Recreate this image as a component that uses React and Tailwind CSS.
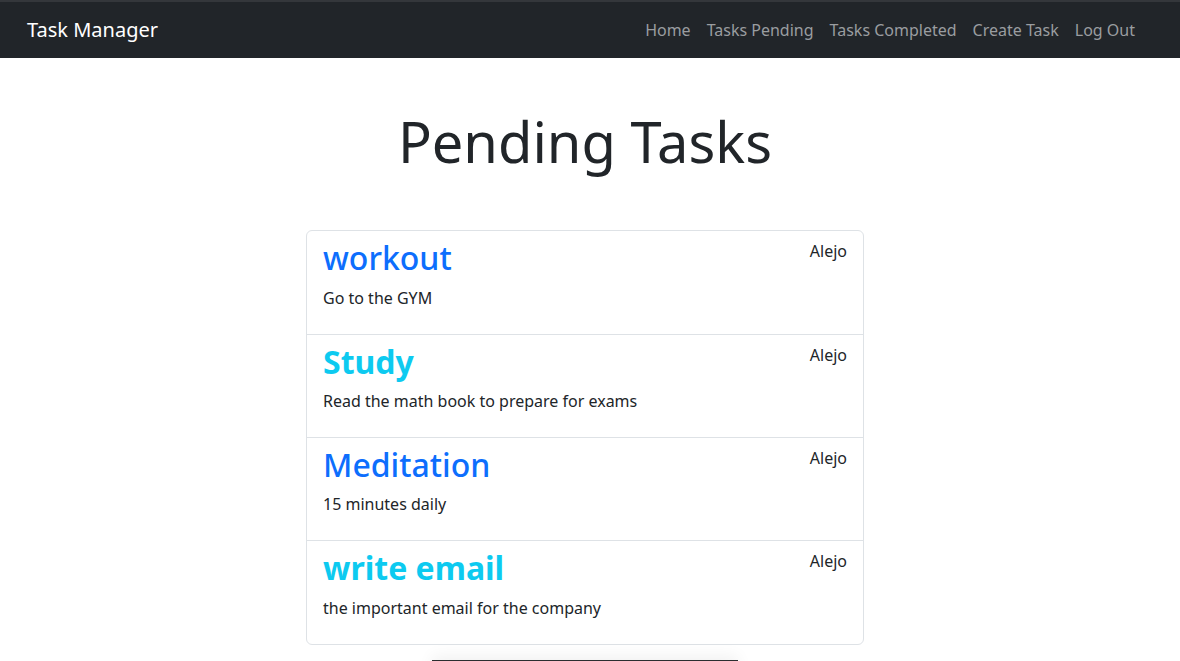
import React from "react";

const tasks = [
  { title: "workout", desc: "Go to the GYM", cls: "text-[#0d6efd] font-medium" },
  { title: "Study", desc: "Read the math book to prepare for exams", cls: "text-[#0dcaf0] font-bold" },
  { title: "Meditation", desc: "15 minutes daily", cls: "text-[#0d6efd] font-medium" },
  { title: "write email", desc: "the important email for the company", cls: "text-[#0dcaf0] font-bold" },
];

export default function App() {
  return (
    <div className="min-h-[661px] bg-white text-[#212529] font-['Noto_Sans',sans-serif]">
      <nav className="h-[58px] bg-[#212529] border-t-2 border-[#34373b] flex items-center pl-[27px] pr-[37px]">
        <span className="text-[20px] leading-[30px] text-white">Task Manager</span>
        <ul className="ml-auto flex items-center">
          {["Home", "Tasks Pending", "Tasks Completed", "Create Task", "Log Out"].map((l) => (
            <li key={l} className="px-[8px] text-[16px] leading-[24px] text-[#9a9da0]">
              {l}
            </li>
          ))}
        </ul>
      </nav>
      <main className="w-[1170px] flex flex-col items-center">
        <h1 className="mt-[50px] text-[56px] leading-[1.2] font-normal">Pending Tasks</h1>
        <ul className="mt-[55px] w-[558px] border border-[#dee2e6] rounded-[6px]">
          {tasks.map((t, i) => (
            <li
              key={t.title}
              className={`px-[16px] pt-[8px] pb-[8px] ${i > 0 ? "border-t border-[#dee2e6]" : ""}`}
            >
              <div className="flex justify-between items-start">
                <h2 className={`text-[32px] leading-[1.2] mb-[8px] ${t.cls}`}>{t.title}</h2>
                <small className="text-[16px] leading-[24px]">Alejo</small>
              </div>
              <p className="text-[16px] leading-[24px] mb-[16px]">{t.desc}</p>
            </li>
          ))}
        </ul>
        <div className="mt-[15px] w-[306px] h-[40px] bg-[#2b2d30] shadow-[0_-4px_16px_rgba(0,0,0,0.06)]"></div>
      </main>
    </div>
  );
}
